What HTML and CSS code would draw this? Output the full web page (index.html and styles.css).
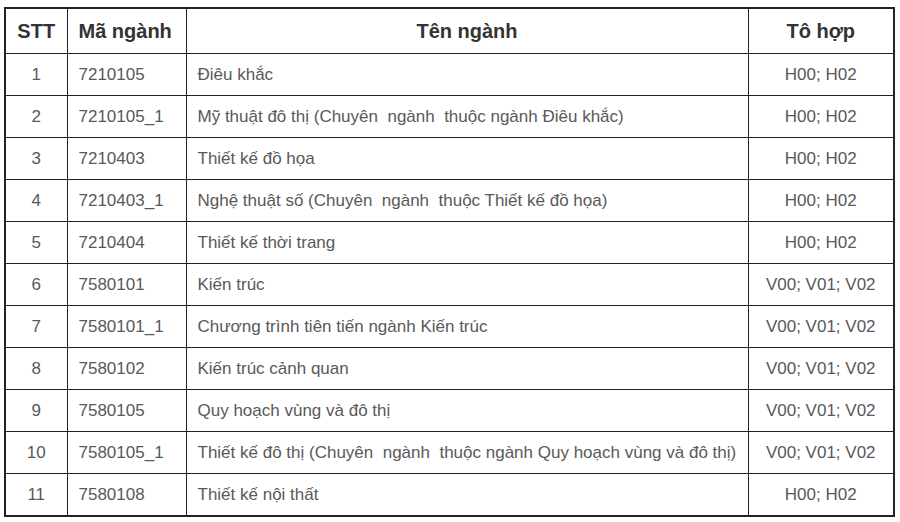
FILE: index.html
```html
<!DOCTYPE html>
<html lang="vi">
<head>
<meta charset="utf-8">
<title>Bảng ngành</title>
<link rel="stylesheet" href="styles.css">
</head>
<body>
<table class="majors">
  <colgroup>
    <col class="c-stt">
    <col class="c-code">
    <col class="c-name">
    <col class="c-combo">
  </colgroup>
  <thead>
    <tr>
      <th>STT</th>
      <th class="left">Mã ngành</th>
      <th>Tên ngành</th>
      <th>Tô hợp</th>
    </tr>
  </thead>
  <tbody>
    <tr><td class="num">1</td><td>7210105</td><td>Điêu khắc</td><td class="combo">H00; H02</td></tr>
    <tr><td class="num">2</td><td>7210105_1</td><td>Mỹ thuật đô thị (Chuyên&nbsp; ngành&nbsp; thuộc ngành Điêu khắc)</td><td class="combo">H00; H02</td></tr>
    <tr><td class="num">3</td><td>7210403</td><td>Thiết kế đồ họa</td><td class="combo">H00; H02</td></tr>
    <tr><td class="num">4</td><td>7210403_1</td><td>Nghệ thuật số (Chuyên&nbsp; ngành&nbsp; thuộc Thiết kế đồ họa)</td><td class="combo">H00; H02</td></tr>
    <tr><td class="num">5</td><td>7210404</td><td>Thiết kế thời trang</td><td class="combo">H00; H02</td></tr>
    <tr><td class="num">6</td><td>7580101</td><td>Kiến trúc</td><td class="combo">V00; V01; V02</td></tr>
    <tr><td class="num">7</td><td>7580101_1</td><td>Chương trình tiên tiến ngành Kiến trúc</td><td class="combo">V00; V01; V02</td></tr>
    <tr><td class="num">8</td><td>7580102</td><td>Kiến trúc cảnh quan</td><td class="combo">V00; V01; V02</td></tr>
    <tr><td class="num">9</td><td>7580105</td><td>Quy hoạch vùng và đô thị</td><td class="combo">V00; V01; V02</td></tr>
    <tr><td class="num">10</td><td>7580105_1</td><td>Thiết kế đô thị (Chuyên&nbsp; ngành&nbsp; thuộc ngành Quy hoạch vùng và đô thị)</td><td class="combo">V00; V01; V02</td></tr>
    <tr><td class="num">11</td><td>7580108</td><td>Thiết kế nội thất</td><td class="combo">H00; H02</td></tr>
  </tbody>
</table>
</body>
</html>
```
FILE: styles.css
```css
html, body {
  margin: 0;
  padding: 0;
  background: #ffffff;
}

body {
  font-family: "Liberation Sans", Arial, sans-serif;
}

.majors {
  margin: 7px 0 0 4px;
  width: 889px;
  table-layout: fixed;
  border-collapse: collapse;
  border: 2px solid #222;
}

.c-stt { width: 62px; }
.c-code { width: 119px; }
.c-name { width: 562px; }
.c-combo { width: 146px; }

.majors th,
.majors td {
  border: 1px solid #222;
  padding: 0 11px;
  white-space: nowrap;
  overflow: hidden;
}

.majors th {
  height: 44px;
  font-size: 20px;
  font-weight: bold;
  color: #333;
  text-align: center;
}

.majors th.left {
  text-align: left;
}

.majors td {
  height: 41px;
  font-size: 17px;
  color: #595959;
  text-align: left;
}

.majors td.num,
.majors td.combo {
  text-align: center;
}
```
